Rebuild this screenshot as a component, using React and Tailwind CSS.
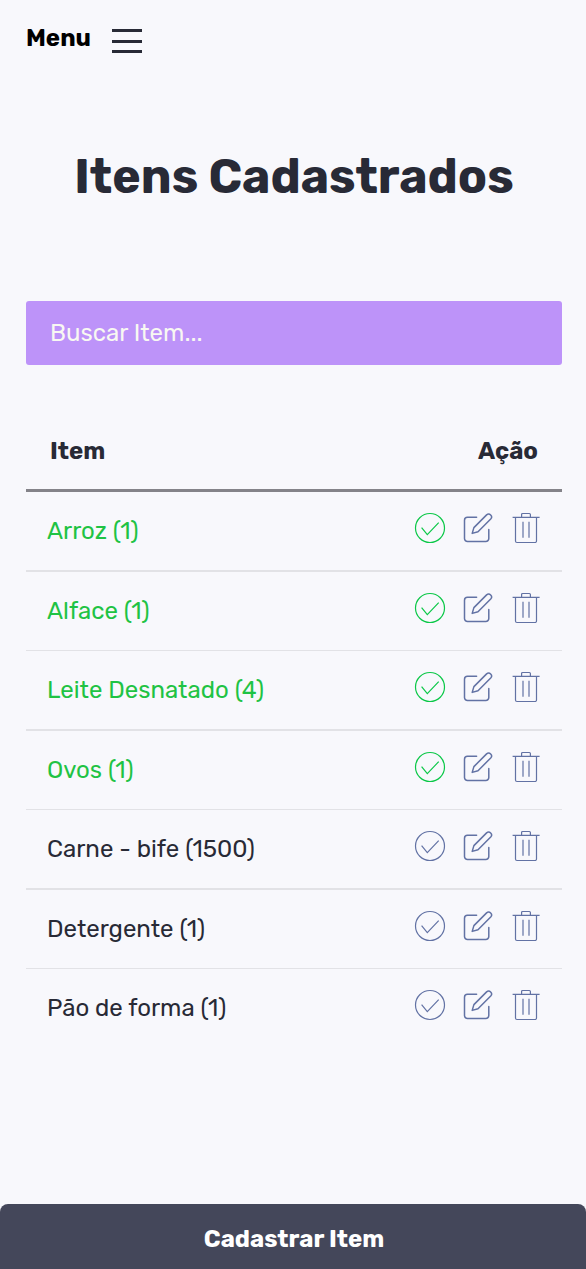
import { useState } from "react";

const INITIAL_ITEMS = [
  { id: 1, name: "Arroz", amount: 1, done: true },
  { id: 2, name: "Alface", amount: 1, done: true },
  { id: 3, name: "Leite Desnatado", amount: 4, done: true },
  { id: 4, name: "Ovos", amount: 1, done: true },
  { id: 5, name: "Carne - bife", amount: 1500, done: false },
  { id: 6, name: "Detergente", amount: 1, done: false },
  { id: 7, name: "Pão de forma", amount: 1, done: false },
];

function CheckIcon() {
  return (
    <svg viewBox="0 0 32 32" className="size-8" fill="none" stroke="currentColor" strokeWidth="1.2" aria-hidden="true">
      <circle cx="16" cy="16" r="14.5" />
      <path d="M7.6 15.6l5.7 7L24.7 10.7" />
    </svg>
  );
}

function EditIcon() {
  return (
    <svg viewBox="0 0 32 32" className="size-8" fill="none" stroke="currentColor" strokeWidth="1.5" strokeLinecap="round" strokeLinejoin="round" aria-hidden="true">
      <path d="M14.6 5.3H5.5a3 3 0 0 0-3 3v18.2a3 3 0 0 0 3 3h18.3a3 3 0 0 0 3-3V17.4" />
      <path d="M10.2 21.4l1.7-5.8L24.6 2.9a2.9 2.9 0 0 1 4.1 4.1L16 19.7z" />
    </svg>
  );
}

function TrashIcon() {
  return (
    <svg viewBox="0 0 32 32" className="size-8" fill="none" stroke="currentColor" strokeWidth="1.2" strokeLinejoin="round" aria-hidden="true">
      <path d="M2.6 5.4h27M11.6 5.2V2.5a1 1 0 0 1 1-1h6.8a1 1 0 0 1 1 1v2.7" />
      <path d="M5.5 5.4v23.6a1.5 1.5 0 0 0 1.5 1.5h18a1.5 1.5 0 0 0 1.5-1.5V5.4" />
      <path d="M13 9.8v16M19 9.8v16" />
    </svg>
  );
}

export default function App() {
  const [items, setItems] = useState(INITIAL_ITEMS);
  const [query, setQuery] = useState("");

  const toggle = (id) =>
    setItems((list) => list.map((item) => (item.id === id ? { ...item, done: !item.done } : item)));
  const remove = (id) => setItems((list) => list.filter((item) => item.id !== id));
  const visible = items.filter((item) => item.name.toLowerCase().includes(query.toLowerCase()));

  return (
    <div className="flex min-h-screen flex-col bg-[#f8f8fc] font-['Rubik','Roboto',sans-serif] text-2xl text-[#282a36]">
      <header className="pt-6 pr-6 pl-[26px]">
        <button type="button" className="flex h-8 items-start gap-[21px] font-bold text-black">
          <span className="leading-7">Menu</span>
          <span className="mt-[5px] flex h-6 w-[30px] flex-col justify-between" aria-hidden="true">
            <span className="h-[3px] bg-[#282a36]" />
            <span className="h-[3px] bg-[#282a36]" />
            <span className="h-[3px] bg-[#282a36]" />
          </span>
        </button>
      </header>

      <main className="flex flex-1 flex-col pt-[92px] pr-6 pb-12 pl-[26px]">
        <h1 className="text-center text-5xl leading-[58px] font-bold">Itens Cadastrados</h1>

        <input
          type="search"
          aria-label="Buscar item"
          placeholder="Buscar Item..."
          value={query}
          onChange={(event) => setQuery(event.target.value)}
          className="mt-[95px] h-16 w-full rounded-[3px] bg-[#bd93f9] px-6 text-[#f8f8f2] outline-none placeholder:text-[#f8f8f2] placeholder:opacity-100"
        />

        <table className="mt-12 w-full border-collapse">
          <thead>
            <tr className="flex h-[79px] items-center justify-between border-b-3 border-[#848389] px-6">
              <th scope="col" className="font-bold">Item</th>
              <th scope="col" className="font-bold">Ação</th>
            </tr>
          </thead>
          <tbody>
            {visible.map((item) => (
              <tr
                key={item.id}
                className="flex items-center justify-between border-[#e2e2e6] pr-5 pl-[21px] not-last:odd:border-b-2 not-last:even:border-b"
              >
                <td className={item.done ? "leading-[78px] text-[#1fc344]" : "leading-[78px]"}>
                  {item.name} ({item.amount})
                </td>
                <td className="flex h-[78px] gap-4 pt-5 text-[#6272a4]">
                  <button
                    type="button"
                    aria-label={`Marcar ${item.name}`}
                    aria-pressed={item.done}
                    onClick={() => toggle(item.id)}
                    className={item.done ? "size-8 text-[#0cc848]" : "size-8"}
                  >
                    <CheckIcon />
                  </button>
                  <button type="button" aria-label={`Editar ${item.name}`} className="size-8">
                    <EditIcon />
                  </button>
                  <button
                    type="button"
                    aria-label={`Excluir ${item.name}`}
                    onClick={() => remove(item.id)}
                    className="size-8"
                  >
                    <TrashIcon />
                  </button>
                </td>
              </tr>
            ))}
          </tbody>
        </table>
      </main>

      <button
        type="button"
        className="sticky bottom-0 h-[65px] w-full rounded-t-lg bg-[#44475a] pt-1 pl-0.5 font-bold text-white"
      >
        Cadastrar Item
      </button>
    </div>
  );
}
